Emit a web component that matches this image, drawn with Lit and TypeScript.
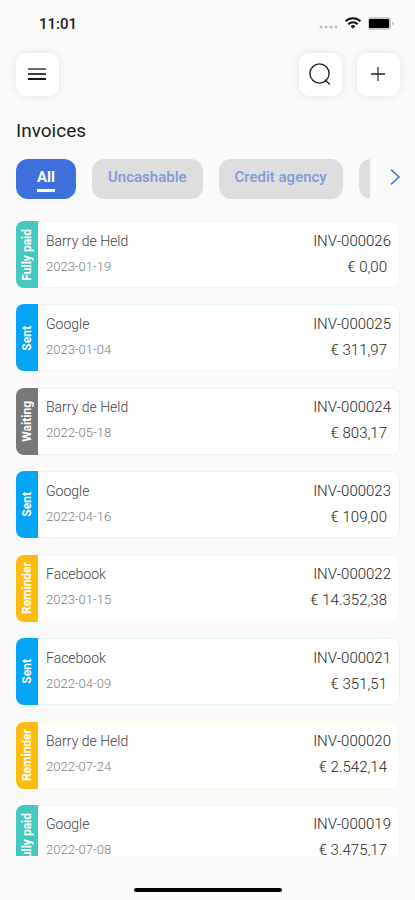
import { LitElement, html, css, svg } from "lit";
import { customElement, property, state } from "lit/decorators.js";
import { classMap } from "lit/directives/class-map.js";

type Status = "Fully paid" | "Sent" | "Waiting" | "Reminder";

interface Invoice {
  customer: string;
  date: string;
  number: string;
  amount: string;
  status: Status;
}

const INVOICES: Invoice[] = [
  { customer: "Barry de Held", date: "2023-01-19", number: "INV-000026", amount: "€ 0,00", status: "Fully paid" },
  { customer: "Google", date: "2023-01-04", number: "INV-000025", amount: "€ 311,97", status: "Sent" },
  { customer: "Barry de Held", date: "2022-05-18", number: "INV-000024", amount: "€ 803,17", status: "Waiting" },
  { customer: "Google", date: "2022-04-16", number: "INV-000023", amount: "€ 109,00", status: "Sent" },
  { customer: "Facebook", date: "2023-01-15", number: "INV-000022", amount: "€ 14.352,38", status: "Reminder" },
  { customer: "Facebook", date: "2022-04-09", number: "INV-000021", amount: "€ 351,51", status: "Sent" },
  { customer: "Barry de Held", date: "2022-07-24", number: "INV-000020", amount: "€ 2.542,14", status: "Reminder" },
  { customer: "Google", date: "2022-07-08", number: "INV-000019", amount: "€ 3.475,17", status: "Fully paid" },
];

@customElement("status-bar")
class StatusBar extends LitElement {
  static styles = css`
    :host {
      display: flex;
      align-items: center;
      justify-content: space-between;
      padding: 12px 20px 8px 39px;
      height: 24px;
    }
    .time {
      font: 500 15px/24px Roboto, sans-serif;
      color: #1c1c1c;
    }
    svg {
      display: block;
    }
  `;

  render() {
    return html`
      <span class="time">11:01</span>
      <svg width="76" height="16" viewBox="0 0 76 16" aria-hidden="true">
        ${[2, 7, 12, 17].map((x) => svg`<circle cx=${x} cy="11" r="1.5" fill="#bdbdbd" />`)}
        <g fill="none" stroke="#111" stroke-width="2">
          <path d="M26.5 5.3 a10.5 10.5 0 0 1 15 0" />
          <path d="M29.3 8.2 a6.7 6.7 0 0 1 9.4 0" />
        </g>
        <path d="M34 12.8 l-2.4 -2.5 a3.4 3.4 0 0 1 4.8 0 z" fill="#111" />
        <rect x="49" y="1" width="23" height="13" rx="3" fill="#cbcbcb" />
        <rect x="50" y="3" width="20" height="9" rx="1" fill="#000" />
        <path d="M73.5 5.5 q2.4 2 0 4 z" fill="#999" />
      </svg>
    `;
  }
}

@customElement("invoice-card")
class InvoiceCard extends LitElement {
  @property({ attribute: false }) invoice!: Invoice;

  static styles = css`
    :host {
      display: block;
    }
    .card {
      display: flex;
      height: 67px;
      border-radius: 8px;
      overflow: hidden;
      background: #fff;
      box-shadow: inset 0 0 0 1px var(--edge);
    }
    .tab {
      flex: none;
      width: 22px;
      display: flex;
      align-items: center;
      justify-content: center;
      background: var(--tone);
      color: #fff;
      font-size: 12px;
      line-height: 20px;
      font-weight: 700;
      white-space: nowrap;
    }
    .label {
      writing-mode: vertical-rl;
      transform: rotate(180deg);
    }
    .fully-paid { --tone: #45c8c0; --edge: #eef7f7; }
    .sent { --tone: #06a4f4; --edge: #e6f4fc; }
    .waiting { --tone: #787878; --edge: #eff1f2; }
    .reminder { --tone: #fdbd10; --edge: #fdf8e4; }
    .info,
    .sum {
      display: flex;
      flex-direction: column;
      justify-content: center;
      gap: 6px;
      padding-bottom: 2px;
      line-height: 20px;
      font-weight: 300;
    }
    .info {
      flex: 1;
      min-width: 0;
      padding-left: 8px;
    }
    .sum {
      align-items: flex-end;
      padding-right: 9px;
      font-size: 15px;
      color: #1e1e1e;
    }
    .customer {
      font-size: 14px;
      color: #444;
    }
    .date {
      font-size: 13px;
      color: #808080;
    }
    .amount {
      padding-right: 4px;
    }
  `;

  render() {
    const i = this.invoice;
    const tone = i.status.toLowerCase().replace(" ", "-");
    return html`
      <article class="card ${tone}">
        <div class="tab"><span class="label">${i.status}</span></div>
        <div class="info">
          <span class="customer">${i.customer}</span>
          <time class="date">${i.date}</time>
        </div>
        <div class="sum">
          <span>${i.number}</span>
          <span class="amount">${i.amount}</span>
        </div>
      </article>
    `;
  }
}

@customElement("app-root")
class AppRoot extends LitElement {
  @state() private filter = "All";

  private filters = ["All", "Uncashable", "Credit agency"];

  static styles = css`
    :host {
      display: flex;
      flex-direction: column;
      height: 100vh;
      overflow: hidden;
      background: #fafafa;
      font-family: Roboto, sans-serif;
      color: #1e1e1e;
    }
    button {
      font: inherit;
      border: 0;
      padding: 0;
      cursor: pointer;
    }
    .toolbar {
      display: flex;
      gap: 15px;
      padding: 9px 15px 0 16px;
    }
    .tool {
      display: grid;
      place-items: center;
      width: 43px;
      height: 43px;
      border-radius: 10px;
      background: #fff;
      box-shadow: 0 0 8px rgba(0, 0, 0, 0.1);
    }
    .menu {
      margin-right: auto;
    }
    svg {
      display: block;
      fill: none;
    }
    h1 {
      margin: 23px 16px 16px;
      font-size: 19px;
      line-height: 24px;
      font-weight: 400;
    }
    .filters {
      display: flex;
      align-items: center;
      padding-right: 10px;
    }
    .chips {
      display: flex;
      flex: 1;
      min-width: 0;
      gap: 16px;
      padding-left: 16px;
      overflow: hidden;
    }
    .chip {
      flex: none;
      display: flex;
      flex-direction: column;
      align-items: center;
      height: 40px;
      padding: 8px 16px 0;
      border-radius: 12px;
      background: #dedede;
      color: #7d97de;
      font-size: 15px;
      line-height: 20px;
      font-weight: 500;
    }
    .active {
      padding: 8px 21px 0;
      background: #3e70db;
      color: #fff;
      font-weight: 700;
    }
    .active::after {
      content: "";
      align-self: stretch;
      height: 3px;
      margin-top: 2px;
      background: #fff;
    }
    .more {
      width: 60px;
    }
    .next {
      flex: none;
      width: 20px;
      height: 36px;
      margin: 0 0 4px 15px;
      display: grid;
      place-items: center;
      background: none;
    }
    .scroller {
      flex: 1;
      min-height: 0;
      margin-top: 22px;
      overflow-y: auto;
      scrollbar-width: none;
    }
    ul {
      display: flex;
      flex-direction: column;
      justify-content: space-between;
      gap: 16px;
      box-sizing: border-box;
      min-height: calc(100% + 16px);
      margin: 0;
      padding: 0 15px 0 16px;
      list-style: none;
    }
    .home {
      display: flex;
      justify-content: center;
      padding: 32px 0 8px;
    }
    .home-bar {
      width: 148px;
      height: 4px;
      border-radius: 2px;
      background: #000;
    }
  `;

  render() {
    return html`
      <status-bar></status-bar>
      <header class="toolbar">
        <button class="tool menu" aria-label="Menu">
          <svg width="19" height="15" viewBox="0 0 19 15">
            <path d="M0 2H18" stroke="#6a6a6a" stroke-width="2" />
            <path d="M0 7H18" stroke="#3c3c3c" stroke-width="2" />
            <path d="M0 12H18" stroke="#1a1a1a" stroke-width="2" />
          </svg>
        </button>
        <button class="tool" aria-label="Search">
          <svg width="23" height="23" viewBox="0 0 23 23" stroke="#222" stroke-width="1.4">
            <circle cx="10.5" cy="10.5" r="9.6" />
            <path d="M16 16.7 L20.8 21.5" />
          </svg>
        </button>
        <button class="tool" aria-label="Add invoice">
          <svg width="15" height="15" viewBox="0 0 15 15" stroke-width="1.5">
            <path d="M7 0V14" stroke="#555" />
            <path d="M0 7H14" stroke="#222" />
          </svg>
        </button>
      </header>
      <h1>Invoices</h1>
      <nav class="filters" aria-label="Invoice filters">
        <div class="chips">
          ${this.filters.map(
            (f) => html`<button
              class=${classMap({ chip: true, active: f === this.filter })}
              aria-pressed=${f === this.filter}
              @click=${() => (this.filter = f)}
            >
              ${f}
            </button>`
          )}
          <button class="chip more" aria-label="Other filter"></button>
        </div>
        <button class="next" aria-label="More filters">
          <svg width="10" height="16" viewBox="0 0 10 16" stroke="#4a78d8" stroke-width="1.6">
            <path d="M1 0.7 L9 8 L1 15.3" />
          </svg>
        </button>
      </nav>
      <main class="scroller">
        <ul>
          ${INVOICES.map((i) => html`<li><invoice-card .invoice=${i}></invoice-card></li>`)}
        </ul>
      </main>
      <div class="home"><div class="home-bar"></div></div>
    `;
  }
}
